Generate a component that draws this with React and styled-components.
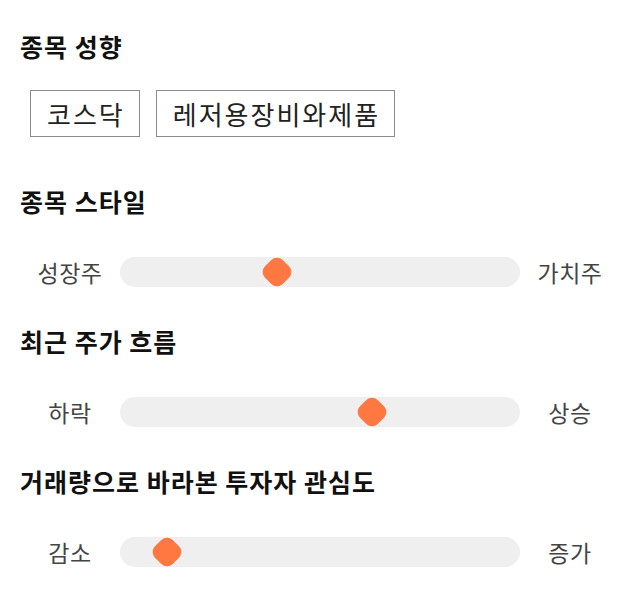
import React from 'react'
import styled, { createGlobalStyle } from 'styled-components'

const GlobalStyle = createGlobalStyle`
	body {
		margin: 0;
		background: #ffffff;
		font-family: "Noto Sans CJK KR", "Noto Sans", sans-serif;
	}
`

const sliders = [
	{ title: '종목 스타일', left: '성장주', right: '가치주', value: 39.3 },
	{ title: '최근 주가 흐름', left: '하락', right: '상승', value: 63 },
	{ title: '거래량으로 바라본 투자자 관심도', left: '감소', right: '증가', value: 11.8 },
]

const tags = ['코스닥', '레저용장비와제품']

export default function App() {
	return (
		<Page>
			<GlobalStyle />
			<Section>
				<Heading>종목 성향</Heading>
				<ChipRow>
					{tags.map((tag) => <Chip key={tag}>{tag}</Chip>)}
				</ChipRow>
			</Section>
			{sliders.map((item) => (
				<Section key={item.title}>
					<Heading>{item.title}</Heading>
					<SliderRow>
						<Label>{item.left}</Label>
						<Track>
							<Thumb style={{ left: item.value + '%' }} />
						</Track>
						<Label>{item.right}</Label>
					</SliderRow>
				</Section>
			))}
		</Page>
	)
}

const Page = styled.div`
	padding: 30px 20px 0;
	display: flex;
	flex-direction: column;
	gap: 38px;
`

const Section = styled.section`
	display: flex;
	flex-direction: column;
	gap: 40px;
`

const Heading = styled.h2`
	margin: 0;
	font-size: 25px;
	line-height: 32px;
	font-weight: 700;
	letter-spacing: 1px;
	color: #111111;
`

const ChipRow = styled.div`
	display: flex;
	gap: 16px;
	padding-left: 10px;
	margin-top: -12px;
	margin-bottom: 10px;
`

const Chip = styled.div`
	height: 47px;
	box-sizing: border-box;
	padding: 0 14px 0 16px;
	display: flex;
	align-items: center;
	border: 1px solid #8a8a8a;
	font-size: 26px;
	letter-spacing: 2px;
	color: #222222;
`

const SliderRow = styled.div`
	display: flex;
	align-items: center;
	height: 30px;
`

const Label = styled.div`
	width: 100px;
	flex-shrink: 0;
	text-align: center;
	font-size: 23px;
	letter-spacing: 0.5px;
	color: #444444;
`

const Track = styled.div`
	position: relative;
	flex: 1;
	height: 30px;
	border-radius: 15px;
	background: #efefef;
`

const Thumb = styled.div`
	position: absolute;
	top: 50%;
	width: 25px;
	height: 25px;
	border-radius: 8px;
	background: #ff7842;
	transform: translate(-50%, -50%) rotate(45deg);
`
